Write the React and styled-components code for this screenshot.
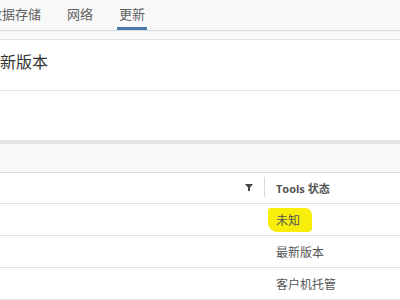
import React from 'react';
import styled, { createGlobalStyle } from 'styled-components';

const GlobalStyle = createGlobalStyle`
  html, body {
    margin: 0;
    padding: 0;
    background: #ffffff;
    overflow: hidden;
  }
  body {
    font-family: "Noto Sans CJK SC", "Open Sans", sans-serif;
  }
`;

const Page = styled.div`
  width: 440px;
  margin-left: -40px;
  height: 300px;
  display: flex;
  flex-direction: column;
`;

const TabBar = styled.div`
  height: 30px;
  background: #f9f9f9;
  border-bottom: 1px solid #d6dce2;
  display: flex;
  align-items: stretch;
  gap: 22px;
  padding-left: 27px;
`;

const Tab = styled.div`
  padding: 1px 2px 0;
  display: flex;
  align-items: center;
  font-size: 13px;
  color: #5f5f5f;
  border-bottom: 3px solid ${({ active }) => (active ? '#4b78a8' : 'transparent')};
  box-sizing: border-box;
`;

const Strip = styled.div`
  height: 8px;
  background: #f8f8f8;
  border-bottom: 1px solid #e3e3e3;
`;

const Panel = styled.div`
  background: #fff;
  height: 51px;
  box-sizing: border-box;
  padding: 0 0 7px 24px;
  border-bottom: 1px solid #e4e4e4;
  display: flex;
  align-items: center;
  font-size: 16px;
  color: #333;
`;

const Spacer = styled.div`
  height: 50px;
  background: #fff;
`;

const Toolbar = styled.div`
  height: 28px;
  background: #f9f9f9;
  border-top: 4px solid #e5e5e5;
  border-bottom: 1px solid #dcdcdc;
`;

const Table = styled.div`
  display: flex;
  flex-direction: column;
`;

const Row = styled.div`
  display: grid;
  grid-template-columns: 305px 1fr;
  height: ${({ head }) => (head ? 30 : 31)}px;
  border-bottom: 1px solid #e1e1e1;
`;

const Cell = styled.div`
  display: flex;
  align-items: center;
  padding-left: 11px;
  font-size: ${({ head }) => (head ? 11 : 12)}px;
  font-weight: ${({ head }) => (head ? 700 : 400)};
  color: #555;
  font-family: ${({ head }) => (head ? '"Open Sans", "Noto Sans CJK SC", sans-serif' : 'inherit')};
`;

const FirstCell = styled.div`
  display: flex;
  align-items: center;
  justify-content: flex-end;
  padding-right: 11px;
  border-right: ${({ divider }) => (divider ? '1px solid #d9d9d9' : 'none')};
  margin: ${({ divider }) => (divider ? '4px 0 6px' : '0')};
`;

const Marker = styled.span`
  background: #f7ee0c;
  padding: 5px 12px 6px 8px;
  margin-left: -8px;
  border-radius: 3px 7px 4px 9px;
  color: #555;
  line-height: 13px;
`;

const FilterIcon = () => (
  <svg width="8" height="7" viewBox="0 0 8 7">
    <path d="M0 0 H8 L5 3.5 V7 H3 V3.5 Z" fill="#444" />
  </svg>
);

export default function App() {
  return (
    <>
      <GlobalStyle />
      <Page>
        <TabBar>
          <Tab>数据存储</Tab>
          <Tab>网络</Tab>
          <Tab active>更新</Tab>
        </TabBar>
        <Strip />
        <Panel>最新版本</Panel>
        <Spacer />
        <Toolbar />
        <Table>
          <Row head>
            <FirstCell divider>
              <FilterIcon />
            </FirstCell>
            <Cell head>Tools 状态</Cell>
          </Row>
          <Row>
            <FirstCell />
            <Cell>
              <Marker>未知</Marker>
            </Cell>
          </Row>
          <Row>
            <FirstCell />
            <Cell>最新版本</Cell>
          </Row>
          <Row>
            <FirstCell />
            <Cell>客户机托管</Cell>
          </Row>
        </Table>
      </Page>
    </>
  );
}
